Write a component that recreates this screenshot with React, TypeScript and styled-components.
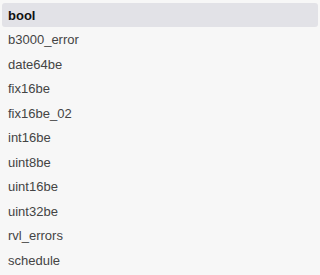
import React, { FC, useState } from "react"
import styled, { createGlobalStyle } from "styled-components"

const GlobalStyle = createGlobalStyle`
  html, body {
    margin: 0;
    padding: 0;
    background: #f7f7f7;
  }
`

const List = styled.ul`
  list-style: none;
  margin: 0;
  padding: 3px 2px;
  display: flex;
  flex-direction: column;
  gap: 0.5px;
  font-family: "Liberation Sans", Arial, sans-serif;
  font-size: 13px;
`

const Item = styled.li<{ $active: boolean }>`
  display: flex;
  align-items: center;
  height: 24px;
  padding: 0 6px;
  border-radius: 3px;
  cursor: pointer;
  color: ${p => (p.$active ? "#111" : "#444")};
  font-weight: ${p => (p.$active ? 700 : 400)};
  background: ${p => (p.$active ? "#e2e2e7" : "transparent")};
`

const tables = [
  "bool",
  "b3000_error",
  "date64be",
  "fix16be",
  "fix16be_02",
  "int16be",
  "uint8be",
  "uint16be",
  "uint32be",
  "rvl_errors",
  "schedule",
]

const App: FC = () => {
  const [selected, setSelected] = useState("bool")

  return (
    <>
      <GlobalStyle />
      <List>
        {tables.map(name => (
          <Item
            key={name}
            $active={name === selected}
            onClick={() => setSelected(name)}
          >
            {name}
          </Item>
        ))}
      </List>
    </>
  )
}

export default App
